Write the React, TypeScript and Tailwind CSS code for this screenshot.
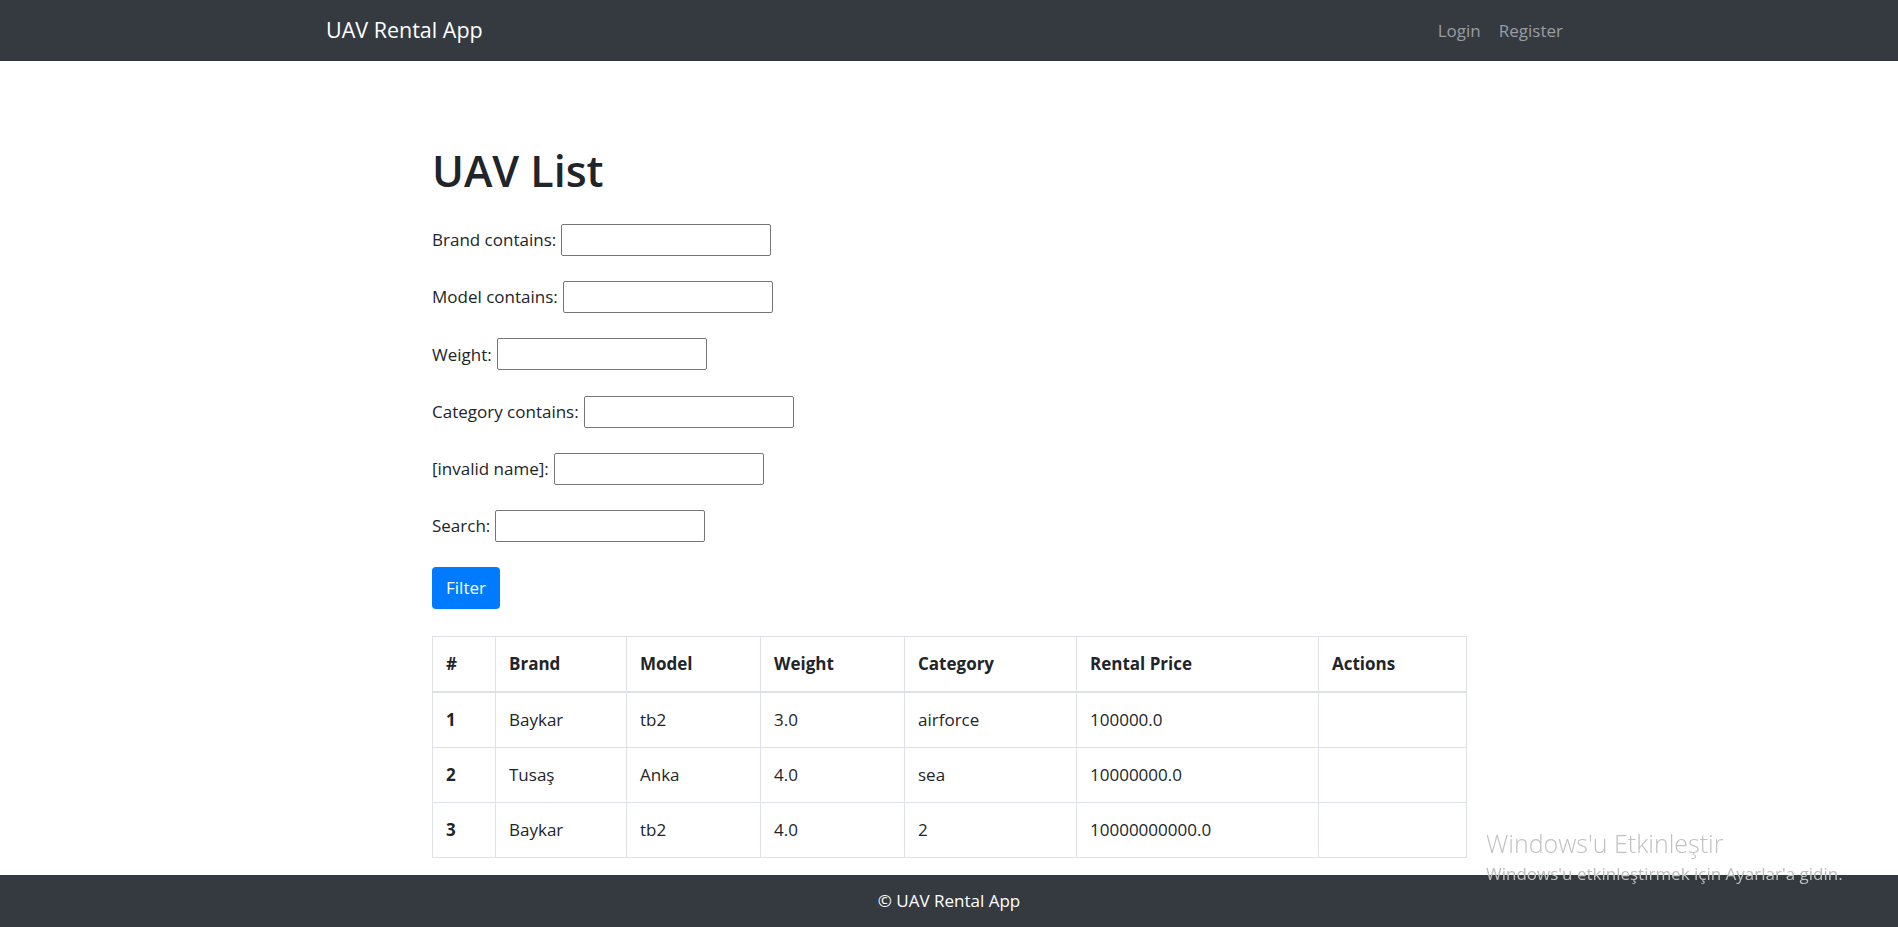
import React from "react";

const font = { fontFamily: '"Open Sans", "Noto Sans", sans-serif' };

const filters = [
  "Brand contains:",
  "Model contains:",
  "Weight:",
  "Category contains:",
  "[invalid name]:",
  "Search:",
];

const columns = [
  { label: "#", w: "w-[63px]" },
  { label: "Brand", w: "w-[131px]" },
  { label: "Model", w: "w-[134px]" },
  { label: "Weight", w: "w-[144px]" },
  { label: "Category", w: "w-[172px]" },
  { label: "Rental Price", w: "w-[242px]" },
  { label: "Actions", w: "w-[148px]" },
];

const uavs = [
  { id: 1, brand: "Baykar", model: "tb2", weight: "3.0", category: "airforce", price: "100000.0" },
  { id: 2, brand: "Tusaş", model: "Anka", weight: "4.0", category: "sea", price: "10000000.0" },
  { id: 3, brand: "Baykar", model: "tb2", weight: "4.0", category: "2", price: "10000000000.0" },
];

function Navbar() {
  return (
    <nav className="h-[61px] bg-[#343a40]">
      <div className="w-[1246px] mx-auto h-full flex items-center justify-between">
        <a href="#" className="text-white text-[21.5px]">UAV Rental App</a>
        <div className="flex items-center text-[17px] text-[#9a9da0]">
          <a href="#" className="px-[9px]">Login</a>
          <a href="#" className="px-[9px]">Register</a>
        </div>
      </div>
    </nav>
  );
}

function FilterForm() {
  return (
    <form className="mt-[27px]">
      <div className="flex flex-col gap-[25.2px]">
        {filters.map((f) => (
          <div key={f} className="flex items-center h-8">
            <label className="text-[17px] text-[#212529] mr-[5px]">{f}</label>
            <input
              type="text"
              className="w-[210px] h-8 border border-[#767676] rounded-[2px] bg-white"
            />
          </div>
        ))}
      </div>
      <button
        type="button"
        className="mt-[25px] w-[68px] h-[42px] bg-[#007bff] text-white text-[17px] rounded-[4px]"
      >
        Filter
      </button>
    </form>
  );
}

function UavTable() {
  const cell = "px-[13px] py-[14px] leading-[26px] border border-[#dee2e6]";
  return (
    <table className="mt-[27px] w-[1034px] table-fixed border-collapse border border-[#dee2e6] text-[17px] text-[#212529]">
      <thead>
        <tr>
          {columns.map((c) => (
            <th
              key={c.label}
              className={`${c.w} text-left font-bold px-[13px] py-[14px] leading-[26px] border border-[#dee2e6] border-b-2`}
            >
              {c.label}
            </th>
          ))}
        </tr>
      </thead>
      <tbody>
        {uavs.map((u) => (
          <tr key={u.id}>
            <th className={`text-left font-bold ${cell}`}>{u.id}</th>
            <td className={cell}>{u.brand}</td>
            <td className={cell}>{u.model}</td>
            <td className={cell}>{u.weight}</td>
            <td className={cell}>{u.category}</td>
            <td className={cell}>{u.price}</td>
            <td className={cell}></td>
          </tr>
        ))}
      </tbody>
    </table>
  );
}

export default function App() {
  return (
    <div style={font} className="min-h-screen bg-white">
      <Navbar />
      <main className="w-[1034px] mx-auto pt-[84px]">
        <h1 className="text-[43px] font-semibold leading-[52px] h-[52px] text-[#212529]">UAV List</h1>
        <FilterForm />
        <UavTable />
      </main>
      <footer className="mt-[17px] h-[52px] bg-[#343a40] flex items-center justify-center text-white text-[17px]">
        © UAV Rental App
      </footer>
      <div className="fixed left-[1486px] top-[827px] pointer-events-none text-[#c2c2c2]">
        <div className="text-[25px] font-light leading-[32px]">Windows'u Etkinleştir</div>
        <div className="mt-[4px] text-[17px] leading-[22px] text-[#bdbdbd]">Windows'u etkinleştirmek için Ayarlar'a gidin.</div>
      </div>
    </div>
  );
}
